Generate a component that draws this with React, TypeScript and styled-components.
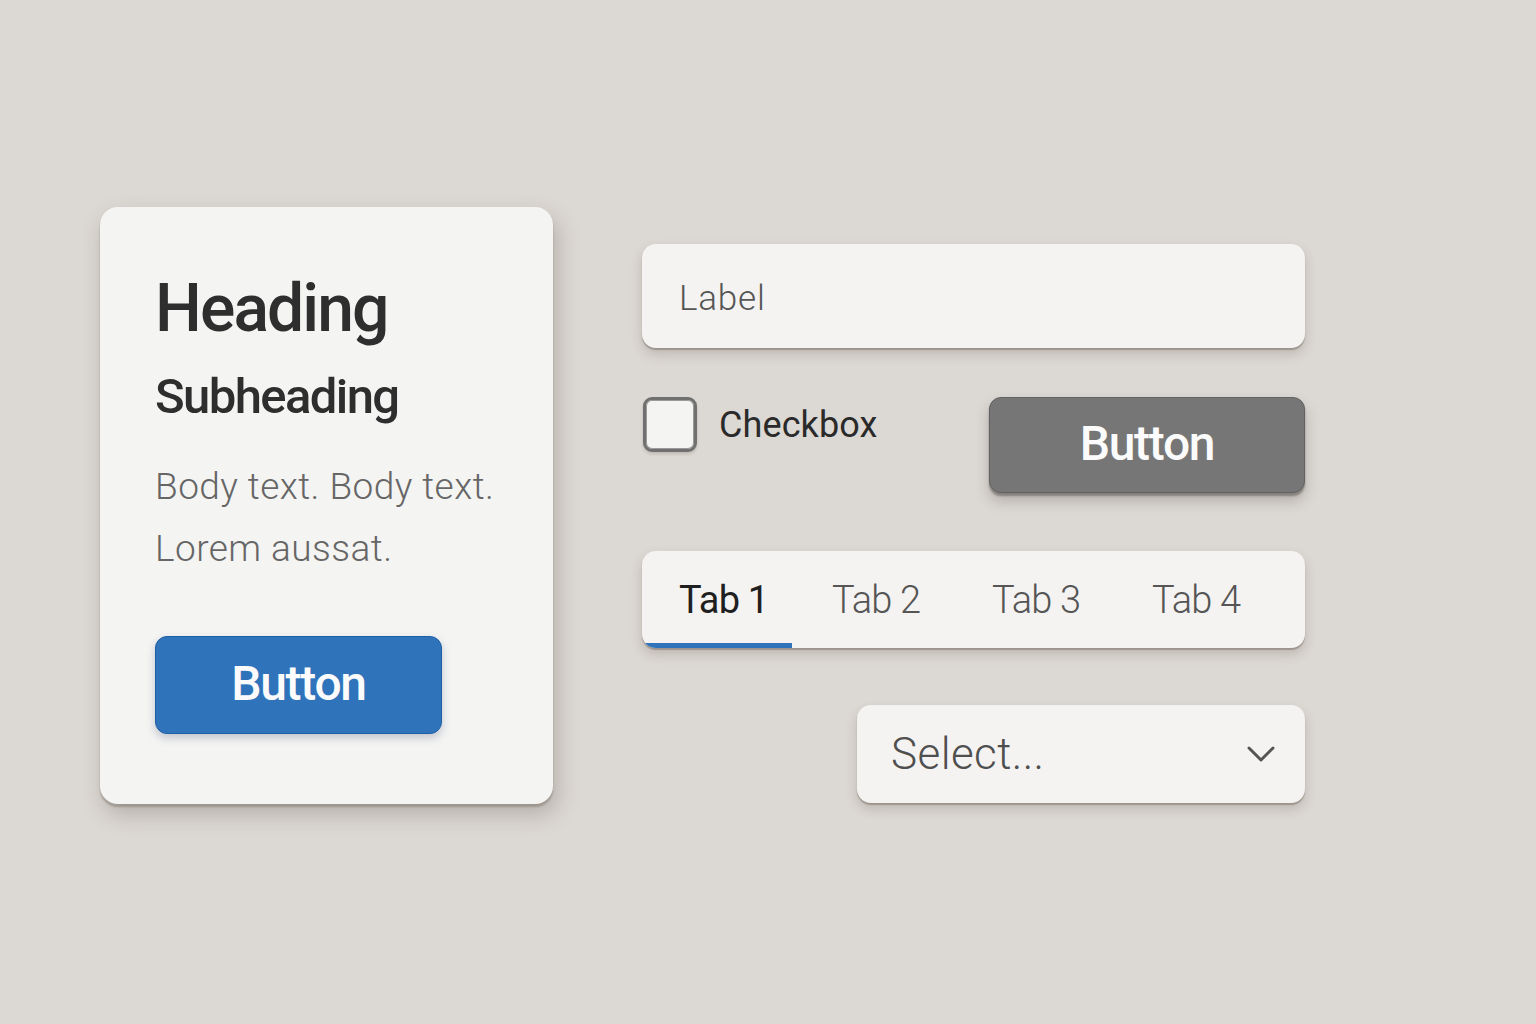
import React from "react";
import styled, { createGlobalStyle } from "styled-components";

const GlobalStyle = createGlobalStyle`
  html, body {
    margin: 0;
    padding: 0;
    background: #dcd8d3;
  }
  body {
    font-family: Roboto, "Liberation Sans", Arial, sans-serif;
    color: #2a2a2a;
  }
`;

const softShadow = `
  box-shadow: 0 2px 1px rgba(110, 100, 90, 0.45), 0 6px 12px rgba(80, 70, 60, 0.22);
`;

const Page = styled.main`
  width: 1536px;
  height: 1024px;
  box-sizing: border-box;
  padding: 207px 0 0 100px;
  display: flex;
  align-items: flex-start;
  gap: 89px;
`;

const Card = styled.section`
  width: 453px;
  height: 597px;
  box-sizing: border-box;
  padding: 69px 0 0 55px;
  background: #f4f4f3;
  border-radius: 18px;
  box-shadow: 0 3px 2px rgba(110, 100, 90, 0.4), 4px 10px 22px rgba(80, 70, 60, 0.28);
  display: flex;
  flex-direction: column;
  align-items: flex-start;
`;

const Heading = styled.h1`
  margin: 0;
  font-size: 66px;
  line-height: 66px;
  font-weight: 500;
  letter-spacing: -1.9px;
  color: #2e2e2e;
`;

const Subheading = styled.h2`
  margin: 30px 0 0;
  font-size: 49px;
  line-height: 49px;
  font-weight: 500;
  letter-spacing: -1.6px;
  color: #2e2e2e;
`;

const Body = styled.p`
  margin: 35px 0 0;
  font-size: 37px;
  line-height: 62px;
  font-weight: 300;
  letter-spacing: 0.45px;
  color: #666;
`;

type ButtonProps = {
  $variant: "primary" | "neutral";
};

const Button = styled.button<ButtonProps>`
  font-family: inherit;
  font-size: 48px;
  font-weight: 500;
  letter-spacing: -1.3px;
  color: #fbfbfb;
  border-radius: 12px;
  cursor: pointer;
  display: flex;
  align-items: center;
  justify-content: center;
  padding: 0 0 4px;
  ${(p) =>
    p.$variant === "primary"
      ? `
    width: 287px;
    height: 98px;
    margin-top: 56px;
    background: #2f73bb;
    border: 1px solid #1f5fa6;
    box-shadow: 0 4px 8px rgba(40, 60, 90, 0.25);
  `
      : `
    width: 316px;
    height: 96px;
    background: #767676;
    border: 1px solid #626262;
    box-shadow: 0 3px 2px rgba(70, 65, 60, 0.45), 0 8px 14px rgba(60, 55, 50, 0.25);
  `}
`;

const Column = styled.div`
  width: 663px;
  margin-top: 37px;
  display: flex;
  flex-direction: column;
  align-items: flex-end;
`;

const Field = styled.div`
  width: 100%;
  height: 104px;
  box-sizing: border-box;
  padding: 4px 37px 0;
  background: #f4f3f2;
  border-radius: 14px;
  ${softShadow}
  display: flex;
  align-items: center;
  font-size: 35px;
  letter-spacing: 0.8px;
  font-weight: 300;
  color: #555;
`;

const Row = styled.div`
  width: 100%;
  margin-top: 49px;
  display: flex;
  justify-content: space-between;
  align-items: flex-start;
`;

const CheckLabel = styled.label`
  display: flex;
  align-items: center;
  gap: 22px;
  font-size: 36px;
  letter-spacing: 0.1px;
  color: #2a2a2a;
  cursor: pointer;
  padding-left: 1px;
`;

const Box = styled.span`
  width: 54px;
  height: 55px;
  box-sizing: border-box;
  border: 3px solid #707070;
  border-radius: 9px;
  background: #f4f4f3;
  box-shadow: inset 0 0 0 1px #9a9a9a, 0 2px 3px rgba(80, 70, 60, 0.2);
`;

const Tabs = styled.nav`
  width: 100%;
  height: 97px;
  margin-top: 58px;
  background: #f4f3f2;
  border-radius: 14px;
  overflow: hidden;
  ${softShadow}
  display: flex;
`;

type TabProps = {
  $active?: boolean;
};

const Tab = styled.div<TabProps>`
  position: relative;
  width: ${(p) => (p.$active ? "150px" : "160px")};
  box-sizing: border-box;
  padding: 0 0 0 ${(p) => (p.$active ? "37px" : "40px")};
  display: flex;
  align-items: center;
  font-size: 38px;
  letter-spacing: -0.8px;
  font-weight: ${(p) => (p.$active ? 400 : 300)};
  color: ${(p) => (p.$active ? "#1f1f1f" : "#555")};
  &::after {
    content: "";
    position: absolute;
    left: 0;
    right: 0;
    bottom: 0;
    height: 5px;
    background: ${(p) => (p.$active ? "#2f73bb" : "transparent")};
  }
`;

const Select = styled.div`
  width: 448px;
  height: 98px;
  margin-top: 57px;
  box-sizing: border-box;
  padding: 0 30px 0 34px;
  background: #f4f3f2;
  border-radius: 14px;
  ${softShadow}
  display: flex;
  align-items: center;
  justify-content: space-between;
  font-size: 44px;
  letter-spacing: 0.4px;
  font-weight: 300;
  color: #4f4f4f;
`;

const Chevron = () => (
  <svg width="28" height="20" viewBox="0 0 28 20" fill="none">
    <path d="M2 4 L14 16 L26 4" stroke="#555" strokeWidth="3" strokeLinecap="round" strokeLinejoin="round" />
  </svg>
);

const App: React.FC = () => {
  const tabs = ["Tab 1", "Tab 2", "Tab 3", "Tab 4"];
  return (
    <>
      <GlobalStyle />
      <Page>
        <Card>
          <Heading>Heading</Heading>
          <Subheading>Subheading</Subheading>
          <Body>
            Body text. Body text.
            <br />
            Lorem aussat.
          </Body>
          <Button $variant="primary">Button</Button>
        </Card>
        <Column>
          <Field>Label</Field>
          <Row>
            <CheckLabel>
              <Box />
              Checkbox
            </CheckLabel>
            <Button $variant="neutral">Button</Button>
          </Row>
          <Tabs>
            {tabs.map((t, i) => (
              <Tab key={t} $active={i === 0}>
                {t}
              </Tab>
            ))}
          </Tabs>
          <Select>
            Select...
            <Chevron />
          </Select>
        </Column>
      </Page>
    </>
  );
};

export default App;
